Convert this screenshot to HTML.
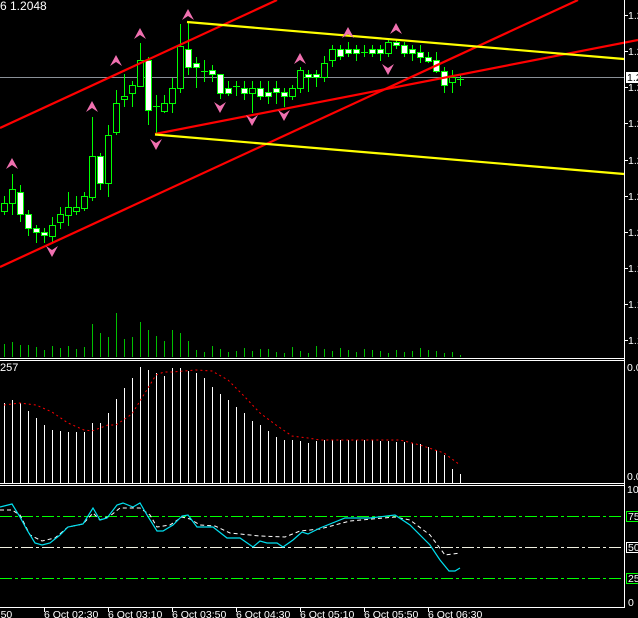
<!DOCTYPE html>
<html><head><meta charset="utf-8"><style>
html,body{margin:0;padding:0;background:#000;width:638px;height:618px;overflow:hidden}
svg{display:block}
text{font-family:"Liberation Sans",sans-serif;font-size:10.5px;fill:#fff}
</style></head><body>
<svg id="s" width="638" height="618" xmlns="http://www.w3.org/2000/svg">
<rect width="638" height="618" fill="#000"/>
<line x1="0" y1="77.5" x2="624" y2="77.5" stroke="#8a9098" stroke-width="1"/>
<g id="vol"></g>
<g id="candles" shape-rendering="crispEdges"></g>
<g stroke-width="2.2" fill="none">
<line x1="0" y1="128" x2="277" y2="0" stroke="#ff0000"/>
<line x1="0" y1="267" x2="578" y2="0" stroke="#ff0000"/>
<line x1="155" y1="134" x2="638" y2="40" stroke="#ff0000"/>
<line x1="187" y1="22" x2="624" y2="59" stroke="#ffff00"/>
<line x1="155" y1="134.5" x2="624" y2="174" stroke="#ffff00"/>
</g>
<g id="arrows" fill="#f070b0"></g>
<g id="hist" shape-rendering="crispEdges"></g>
<polyline id="sig" fill="none" stroke="#ff0000" stroke-width="1" stroke-dasharray="2,3"/>
<line x1="0" y1="516.5" x2="624" y2="516.5" stroke="#00ff00" stroke-dasharray="12,3,3,3"/>
<line x1="0" y1="547.5" x2="624" y2="547.5" stroke="#f0f0e0" stroke-dasharray="12,3,3,3"/>
<line x1="0" y1="578.5" x2="624" y2="578.5" stroke="#00ff00" stroke-dasharray="12,3,3,3"/>
<polyline id="stw" fill="none" stroke="#fff" stroke-width="1" stroke-dasharray="4,3"/>
<polyline id="stc" fill="none" stroke="#00e0f0" stroke-width="1.2"/>
<g stroke="#fff" stroke-width="1" shape-rendering="crispEdges" fill="none">
<line x1="0" y1="358.5" x2="624" y2="358.5"/>
<line x1="0" y1="360.5" x2="624" y2="360.5"/>
<line x1="0" y1="483.5" x2="624" y2="483.5"/>
<line x1="0" y1="485.5" x2="624" y2="485.5"/>
<line x1="0" y1="607.5" x2="624" y2="607.5"/>
<line x1="624.5" y1="0" x2="624.5" y2="608"/>
</g>
<g id="ticks" stroke="#fff" shape-rendering="crispEdges"></g>
<text x="0" y="10" style="font-size:12px">6 1.2048</text>
<text x="0" y="371" style="font-size:11px">257</text>
<g>
<text x="628" y="19">1.2</text>
<text x="628" y="55">1.2</text>
<rect x="626" y="72" width="12" height="11" fill="#fff"/>
<text x="627" y="81" style="fill:#000">1.2</text>
<text x="628" y="91">1.2</text>
<text x="628" y="127">1.2</text>
<text x="628" y="164">1.2</text>
<text x="628" y="200">1.2</text>
<text x="628" y="236">1.2</text>
<text x="628" y="272">1.1</text>
<text x="628" y="308">1.1</text>
<text x="628" y="344">1.1</text>
<text x="627" y="371">0.0</text>
<text x="627" y="480">0.0</text>
<text x="627" y="493">100</text>
<rect x="626.5" y="511.5" width="12" height="10" fill="none" stroke="#00ff00"/>
<text x="628" y="520">75</text>
<rect x="626.5" y="542.5" width="12" height="10" fill="none" stroke="#fff"/>
<text x="628" y="551">50</text>
<rect x="626.5" y="573.5" width="12" height="10" fill="none" stroke="#00ff00"/>
<text x="628" y="582">25</text>
<text x="628" y="606">0</text>
</g>
<g>
<text x="-14" y="618">01:50</text>
<text x="44" y="618">6 Oct 02:30</text>
<text x="108" y="618">6 Oct 03:10</text>
<text x="172" y="618">6 Oct 03:50</text>
<text x="236" y="618">6 Oct 04:30</text>
<text x="300" y="618">6 Oct 05:10</text>
<text x="364" y="618">6 Oct 05:50</text>
<text x="428" y="618">6 Oct 06:30</text>
</g>
</svg>
<script>
var NS="http://www.w3.org/2000/svg";
function el(p,t,a){var e=document.createElementNS(NS,t);for(var k in a)e.setAttribute(k,a[k]);document.getElementById(p).appendChild(e);return e;}
var C=[[196,215,203,211,0],[174,215,189,203,0],[185,222,192,214,1],[210,236,214,228,1],[225,243,228,232,1],[228,243,232,235,1],[217,242,225,236,0],[207,229,214,222,0],[192,226,207,215,0],[196,215,207,211,0],[192,211,196,208,0],[117,201,156,197,0],[153,190,156,183,1],[125,197,135,183,0],[90,135,103,132,0],[74,107,96,99,0],[81,107,85,93,0],[43,86,60,86,0],[57,125,60,110,1],[95,133,106,106,2],[95,113,103,111,0],[78,113,88,103,0],[24,93,46,88,0],[23,75,49,67,1],[57,88,63,67,1],[60,82,71,71,2],[65,82,70,74,1],[74,99,74,93,1],[81,96,88,93,1],[81,96,86,86,2],[81,100,88,93,1],[81,113,88,93,0],[81,100,88,96,1],[81,104,92,96,1],[81,104,88,92,1],[88,107,92,96,1],[85,100,88,96,0],[67,93,70,88,0],[70,92,74,77,1],[70,87,74,77,1],[56,82,63,77,0],[45,67,49,60,0],[45,60,49,56,1],[42,57,49,53,1],[45,61,49,53,1],[45,57,52,52,2],[45,57,49,53,1],[45,61,49,53,1],[39,57,42,53,0],[39,49,42,45,1],[42,57,45,53,1],[45,61,49,53,1],[45,63,52,57,1],[52,63,57,61,1],[52,73,60,71,1],[67,93,71,85,1],[70,93,77,82,0],[74,86,79,79,2]];
C.forEach(function(c,i){var x=4+8*i;
 el("candles","rect",{x:x,y:c[0],width:1,height:c[1]-c[0],fill:"#00ff00"});
 if(c[4]==2){el("candles","rect",{x:x-3,y:c[2],width:7,height:1,fill:"#00ff00"});}
 else{el("candles","rect",{x:x-2.5,y:c[2]+0.5,width:6,height:Math.max(3,c[3]-c[2]),fill:c[4]==1?"#fff":"#000",stroke:"#00ff00","stroke-width":1});}
});
var V=[344,342,345,345,347,350,346,348,346,349,347,324,333,337,313,339,337,322,330,336,341,330,333,341,350,352,346,349,352,351,348,351,349,349,352,353,347,351,353,346,349,351,348,350,352,349,350,351,353,350,352,351,348,350,351,353,352,355];
V.forEach(function(v,i){var x=4+8*i;el("vol","rect",{x:x,y:v,width:1,height:357-v,fill:"#00c000"});});
var H=[403,400,403,411,418,425,430,431,432,432,432,423,423,413,399,388,378,367,370,373,376,368,368,371,373,378,387,394,400,407,413,421,425,431,437,440,440,441,443,441,440,440,440,440,440,440,440,441,441,442,442,443,444,447,450,455,469,474,478];
H.forEach(function(v,i){var x=4+8*i;if(x>462)return;el("hist","rect",{x:x,y:v,width:1,height:483-v,fill:"#fff"});});
document.getElementById("sig").setAttribute("points","4,405 20,403 36,405 52,412 68,423 84,430 92,431 108,425 116,425 132,414 148,388 156,375 164,372 172,372 196,370 212,371 228,380 244,396 260,413 276,425 292,436 308,438 320,440 340,440 400,440 420,445 444,453 452,459 460,465");
document.getElementById("stc").setAttribute("points","0,507 12,504 20,517 27,530 35,543 42,545 50,543 60,535 68,527 83,524 93,508 100,520 107,518 117,505 123,503 133,507 140,503 147,515 157,531 163,531 173,525 182,516 188,515 197,527 213,527 227,538 240,538 253,547 260,541 267,543 277,543 283,547 293,540 302,532 308,534 320,528 345,518 370,518 395,515 410,525 430,545 440,560 449,571 455,571 460,568");
document.getElementById("stw").setAttribute("points","0,510 12,510 20,515 30,535 42,541 55,538 68,527 83,524 93,513 100,520 110,516 120,508 140,508 150,515 157,527 170,525 182,517 190,519 200,525 215,526 230,533 260,536 285,537 300,531 320,529 350,521 395,517 410,520 430,535 445,555 460,553");
function up(x,y){el("arrows","polygon",{points:(x)+","+(y-6)+" "+(x+6)+","+(y+5)+" "+(x)+","+(y+1)+" "+(x-6)+","+(y+5)});}
function dn(x,y){el("arrows","polygon",{points:(x)+","+(y+6)+" "+(x+6)+","+(y-5)+" "+(x)+","+(y-1)+" "+(x-6)+","+(y-5)});}
[[12,164],[92,107],[116,61],[140,34],[188,15],[300,59],[348,33],[396,29]].forEach(function(p){up(p[0],p[1]);});
[[52,251],[156,144],[220,107],[252,120],[284,115],[388,69]].forEach(function(p){dn(p[0],p[1]);});
[15,51,87,123,160,196,232,268,304,340].forEach(function(y){el("ticks","line",{x1:624,y1:y+0.5,x2:628,y2:y+0.5});});
[44,108,172,236,300,364,428].forEach(function(x){el("ticks","line",{x1:x+0.5,y1:608,x2:x+0.5,y2:612});});
</script>
</body></html>
